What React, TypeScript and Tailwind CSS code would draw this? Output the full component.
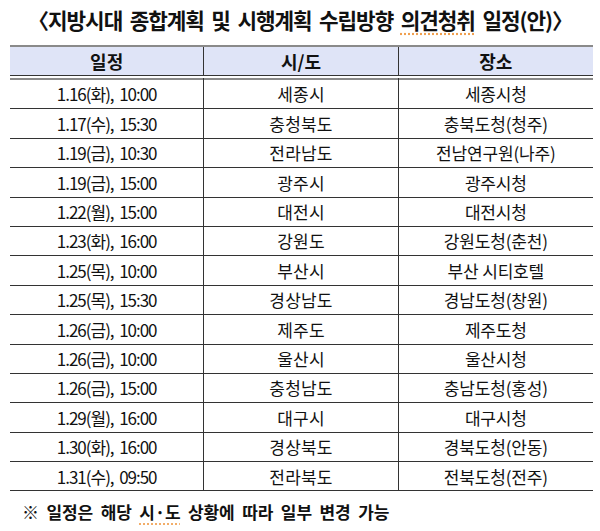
import React from "react";

const rows = [
  ["1.16(화),  10:00", "세종시", "세종시청"],
  ["1.17(수),  15:30", "충청북도", "충북도청(청주)"],
  ["1.19(금),  10:30", "전라남도", "전남연구원(나주)"],
  ["1.19(금),  15:00", "광주시", "광주시청"],
  ["1.22(월),  15:00", "대전시", "대전시청"],
  ["1.23(화),  16:00", "강원도", "강원도청(춘천)"],
  ["1.25(목),  10:00", "부산시", "부산 시티호텔"],
  ["1.25(목),  15:30", "경상남도", "경남도청(창원)"],
  ["1.26(금),  10:00", "제주도", "제주도청"],
  ["1.26(금),  10:00", "울산시", "울산시청"],
  ["1.26(금),  15:00", "충청남도", "충남도청(홍성)"],
  ["1.29(월),  16:00", "대구시", "대구시청"],
  ["1.30(화),  16:00", "경상북도", "경북도청(안동)"],
  ["1.31(수),  09:50", "전라북도", "전북도청(전주)"],
];

const font = { fontFamily: '"Noto Sans CJK KR", "Noto Sans", sans-serif' };

export default function App() {
  return (
    <div className="w-[600px] h-[531px] bg-white text-[#111] overflow-hidden" style={font}>
      <h1 className="pt-[5px] h-[45px] text-center text-[21.3px] font-bold tracking-[-0.05em] whitespace-pre leading-[30px]">
        {"〈지방시대  종합계획  및  시행계획  수립방향  "}
        <span className="underline decoration-dotted decoration-[#f0a050] underline-offset-4">의견청취</span>
        {"  일정(안)〉"}
      </h1>

      <div className="ml-[10px] w-[583px] border-t-2 border-[#8a8a8a]">
        <div className="grid grid-cols-3 h-[29px] bg-[#dfe4f7] text-[18px] font-bold border-b border-[#333]">
          <div className="flex items-center justify-center border-r border-[#333]">일정</div>
          <div className="flex items-center justify-center border-r border-[#333]">시/도</div>
          <div className="flex items-center justify-center">장소</div>
        </div>
        <div className="h-[4px] border-t-[2px] border-white bg-[#8a8a8a] grid grid-cols-3">
          <div className="border-r border-[#333]" />
          <div className="border-r border-[#333]" />
          <div />
        </div>
        {rows.map((r, i) => (
          <div key={i} className="grid grid-cols-3 h-[29.4px] text-[17px] border-b border-[#333]">
            <div className="flex items-center justify-center border-r border-[#333] whitespace-pre tracking-[-0.06em]">{r[0]}</div>
            <div className="flex items-center justify-center border-r border-[#333] tracking-[0.01em]">{r[1]}</div>
            <div className="flex items-center justify-center tracking-[-0.01em]">{r[2]}</div>
          </div>
        ))}
      </div>

      <p className="mt-[8px] pl-[22px] text-[17px] font-bold whitespace-pre tracking-[-0.005em]">
        {"※  일정은  해당  "}
        <span className="underline decoration-dotted decoration-[#f0a050] underline-offset-4">시·도</span>
        {"  상황에  따라  일부  변경  가능"}
      </p>
    </div>
  );
}
